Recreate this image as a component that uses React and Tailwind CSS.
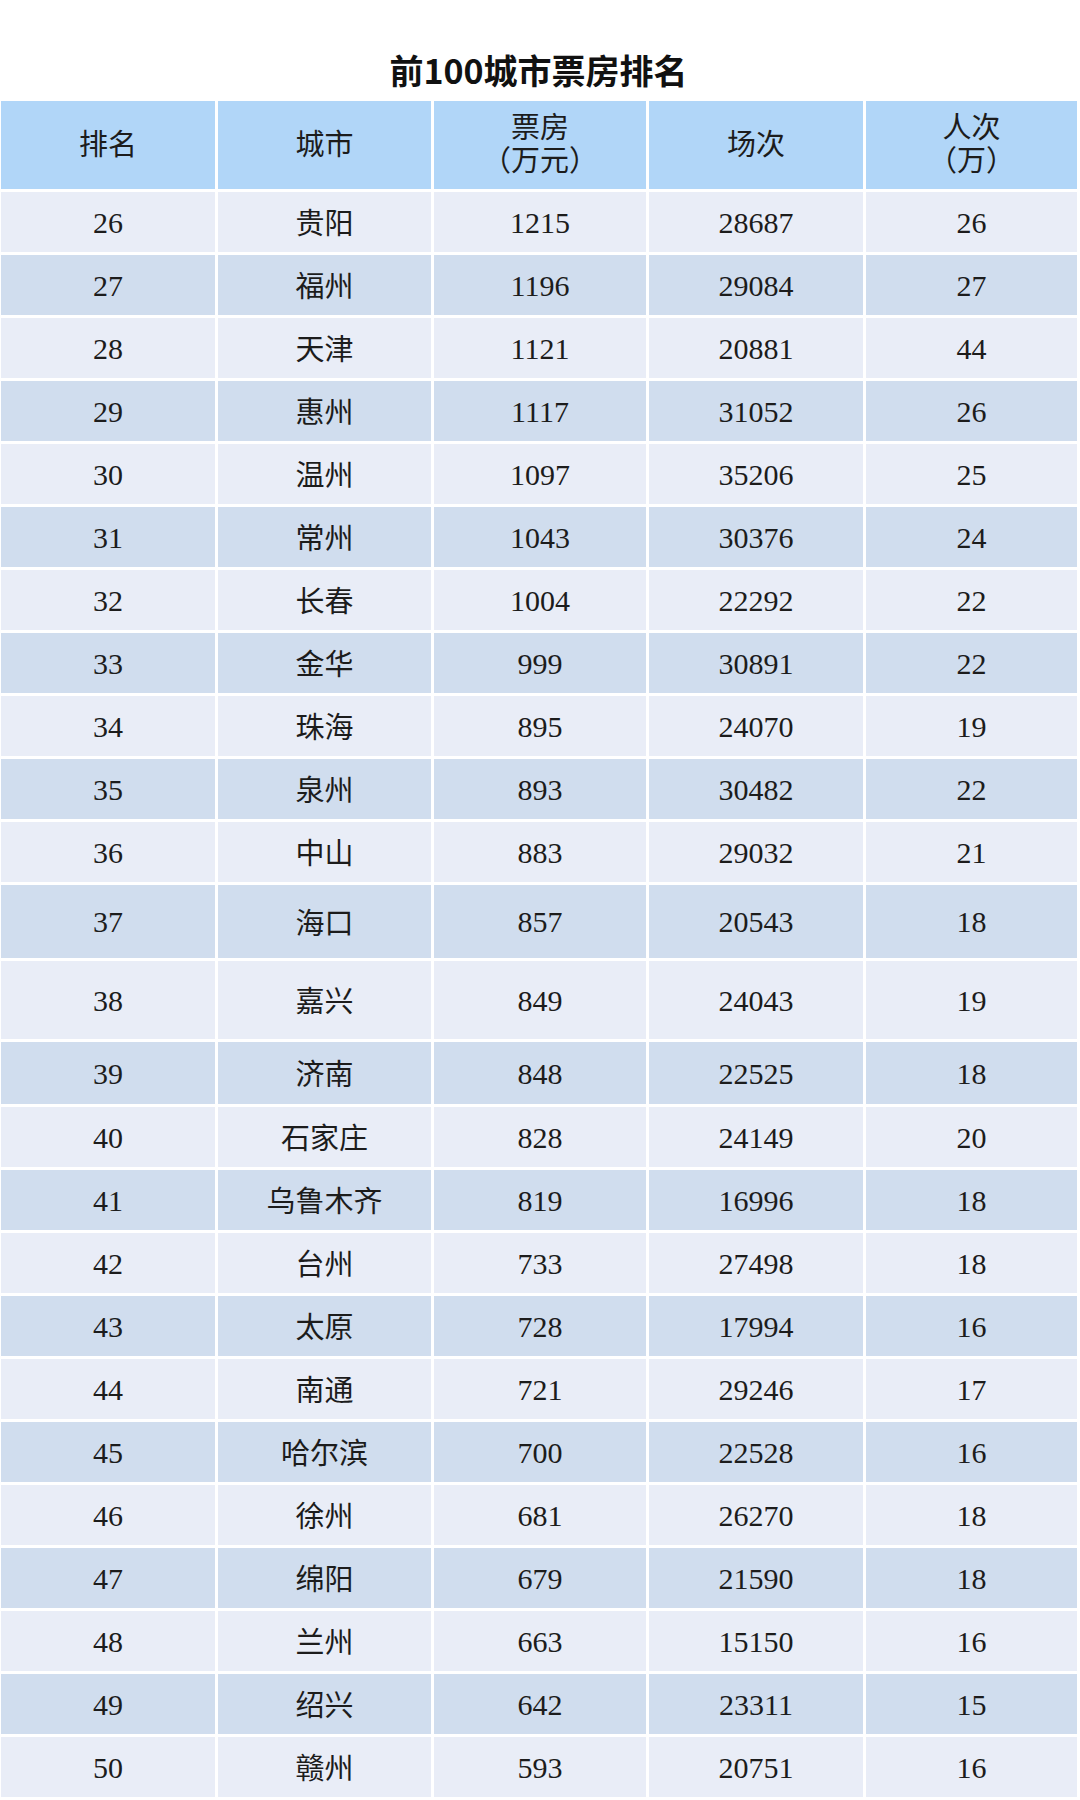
const FILAS = [
  [26, "贵阳", 1215, 28687, 26],
  [27, "福州", 1196, 29084, 27],
  [28, "天津", 1121, 20881, 44],
  [29, "惠州", 1117, 31052, 26],
  [30, "温州", 1097, 35206, 25],
  [31, "常州", 1043, 30376, 24],
  [32, "长春", 1004, 22292, 22],
  [33, "金华", 999, 30891, 22],
  [34, "珠海", 895, 24070, 19],
  [35, "泉州", 893, 30482, 22],
  [36, "中山", 883, 29032, 21],
  [37, "海口", 857, 20543, 18],
  [38, "嘉兴", 849, 24043, 19],
  [39, "济南", 848, 22525, 18],
  [40, "石家庄", 828, 24149, 20],
  [41, "乌鲁木齐", 819, 16996, 18],
  [42, "台州", 733, 27498, 18],
  [43, "太原", 728, 17994, 16],
  [44, "南通", 721, 29246, 17],
  [45, "哈尔滨", 700, 22528, 16],
  [46, "徐州", 681, 26270, 18],
  [47, "绵阳", 679, 21590, 18],
  [48, "兰州", 663, 15150, 16],
  [49, "绍兴", 642, 23311, 15],
  [50, "赣州", 593, 20751, 16],
];

// a few rows in the source image are taller than the rest
const ALTO = {
  37: "h-[73px]",
  38: "h-[78px]",
  39: "h-[62px]",
};

const GRID = "grid grid-cols-[214px_213px_212px_214px_211px] gap-x-[3px]";

function Cabecera({ lineas }) {
  return (
    <div className="bg-[#b1d6f8] flex flex-col items-center justify-center leading-[33px]">
      {lineas.map((l) => (
        <span key={l}>{l}</span>
      ))}
    </div>
  );
}

export default function App() {
  return (
    <div className="w-[1080px] min-h-[1800px] bg-white text-[#1c1c1c] font-['Liberation_Serif','Noto_Sans_CJK_SC',serif]">
      <div className="h-[101px] pt-[50px] pr-[3px] text-center">
        <h1 className="text-[34px] leading-[40px] font-bold text-[#111] font-['Noto_Sans_CJK_SC','Noto_Sans',sans-serif]">
          前100城市票房排名
        </h1>
      </div>

      <div className="ml-[1px] flex flex-col gap-y-[3px] text-[30px]">
        <div className={`${GRID} h-[88px] text-[29px]`}>
          <Cabecera lineas={["排名"]} />
          <Cabecera lineas={["城市"]} />
          <Cabecera lineas={["票房", "（万元）"]} />
          <Cabecera lineas={["场次"]} />
          <Cabecera lineas={["人次", "（万）"]} />
        </div>

        {FILAS.map((f, i) => {
          const fondo = i % 2 === 0 ? "bg-[#e9edf7]" : "bg-[#d0ddee]";
          const alto = ALTO[f[0]] || "h-[60px]";
          return (
            <div key={f[0]} className={`${GRID} ${alto}`}>
              {f.map((v, j) => (
                <div key={j} className={`${fondo} flex items-center justify-center`}>
                  {j === 1 ? (
                    <span className="text-[29px] translate-y-[3px]">{v}</span>
                  ) : (
                    v
                  )}
                </div>
              ))}
            </div>
          );
        })}
      </div>
    </div>
  );
}
